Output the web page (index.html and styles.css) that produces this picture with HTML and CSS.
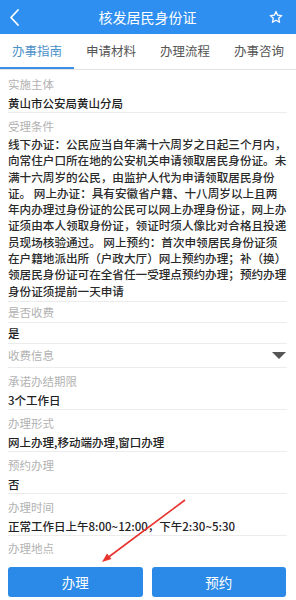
FILE: index.html
```html
<!DOCTYPE html>
<html lang="zh-CN">
<head>
<meta charset="utf-8">
<link rel="stylesheet" href="styles.css">
</head>
<body>
<div class="page">
  <header class="header">
    <svg class="back" width="20" height="34" viewBox="0 0 20 34"><polyline points="18,10 11,17.5 18,25" fill="none" stroke="#fff" stroke-width="1.8" stroke-linecap="round" stroke-linejoin="round"/></svg>
    <div class="title">核发居民身份证</div>
    <svg class="star" width="14" height="14" viewBox="0 0 24 24"><polygon points="12,2.5 14.9,8.9 21.8,9.6 16.6,14.2 18.1,21 12,17.5 5.9,21 7.4,14.2 2.2,9.6 9.1,8.9" fill="none" stroke="#fff" stroke-width="2.2" stroke-linejoin="round"/></svg>
  </header>
  <nav class="tabs">
    <div class="tab active">办事指南</div>
    <div class="tab">申请材料</div>
    <div class="tab">办理流程</div>
    <div class="tab">办事咨询</div>
  </nav>
  <main class="content">
    <section class="field">
      <div class="label">实施主体</div>
      <div class="value">黄山市公安局黄山分局</div>
    </section>
    <section class="field">
      <div class="label">受理条件</div>
      <div class="body">线下办证：公民应当自年满十六周岁之日起三个月内，向常住户口所在地的公安机关申请领取居民身份证。未满十六周岁的公民，由监护人代为申请领取居民身份证。 网上办证：具有安徽省户籍、十八周岁以上且两年内办理过身份证的公民可以网上办理身份证，网上办证须由本人领取身份证，领证时须人像比对合格且投递员现场核验通过。 网上预约：首次申领居民身份证须在户籍地派出所（户政大厅）网上预约办理；补（换）领居民身份证可在全省任一受理点预约办理；预约办理身份证须提前一天申请</div>
    </section>
    <div class="row label-row">是否收费</div>
    <div class="row value-row">是</div>
    <div class="row label-row fold">收费信息<span class="tri"></span></div>
    <section class="field">
      <div class="label">承诺办结期限</div>
      <div class="value">3个工作日</div>
    </section>
    <section class="field">
      <div class="label">办理形式</div>
      <div class="value">网上办理,移动端办理,窗口办理</div>
    </section>
    <section class="field">
      <div class="label">预约办理</div>
      <div class="value">否</div>
    </section>
    <section class="field">
      <div class="label">办理时间</div>
      <div class="value">正常工作日上午8:00~12:00，下午2:30~5:30</div>
    </section>
    <div class="label last">办理地点</div>
  </main>
  <footer class="actions">
    <button class="btn">办理</button>
    <button class="btn">预约</button>
  </footer>
  <svg class="arrow" width="296" height="600" viewBox="0 0 296 600">
    <line x1="185" y1="500" x2="108" y2="557.5" stroke="#e8332f" stroke-width="1.6"/>
    <polygon points="102,562 111.5,559 107,553.5" fill="#e8332f"/>
  </svg>
</div>
</body>
</html>
```
FILE: styles.css
```css
* { box-sizing: border-box; margin: 0; padding: 0; }
body {
  margin: 0;
  background: #fff;
  font-family: "Noto Sans CJK SC", "Noto Sans", sans-serif;
}
.page {
  position: relative;
  width: 296px;
  height: 600px;
  overflow: hidden;
  display: flex;
  flex-direction: column;
}
.header {
  height: 34px;
  background: #2f8ff0;
  display: flex;
  align-items: center;
  justify-content: space-between;
  padding: 0 13px 0 0;
}
.back { display: block; }
.title {
  color: #fff;
  font-size: 14px;
  flex: 1;
  text-align: center;
  padding-left: 6px;
}
.star { display: block; }
.tabs {
  height: 36px;
  display: flex;
  border-bottom: 1px solid #e2e2e2;
}
.tab {
  flex: 1;
  text-align: center;
  font-size: 12.5px;
  line-height: 34px;
  color: #555;
  border-bottom: 2px solid transparent;
}
.tab.active {
  color: #4a90c8;
  border-bottom-color: #3a8ee6;
}
.content {
  padding: 1px 9px 0 8px;
  flex: 1;
}
.field {
  border-bottom: 1px solid #ececec;
}
.label {
  font-size: 11.5px;
  color: #b2b2b2;
  line-height: 20px;
  padding-top: 3px;
}
.value {
  font-size: 11.5px;
  color: #222;
  font-weight: 500;
  line-height: 18px;
}
.body {
  font-size: 11.6px;
  color: #2a2a2a;
  font-weight: 500;
  line-height: 16.3px;
  padding-bottom: 2px;
}
.row {
  font-size: 11.5px;
  height: 21px;
  line-height: 21px;
  border-bottom: 1px solid #ececec;
}
.label-row { color: #b2b2b2; }
.value-row { color: #222; font-weight: 500; }
.fold {
  height: 24px;
  line-height: 24px;
  display: flex;
  justify-content: space-between;
  align-items: center;
}
.tri {
  width: 0;
  height: 0;
  border-left: 7px solid transparent;
  border-right: 7px solid transparent;
  border-top: 7px solid #555;
  margin-right: 1px;
}
.last { padding-top: 2px; }
.actions {
  display: flex;
  gap: 9px;
  padding: 7px 10px 3px 8px;
}
.btn {
  flex: 1;
  height: 30px;
  border: none;
  border-radius: 3px;
  background: #2b8ae8;
  color: #fff;
  font-family: "Noto Sans CJK SC", "Noto Sans", sans-serif;
  font-size: 13.5px;
}
.arrow {
  position: absolute;
  left: 0;
  top: 0;
  pointer-events: none;
}
```
